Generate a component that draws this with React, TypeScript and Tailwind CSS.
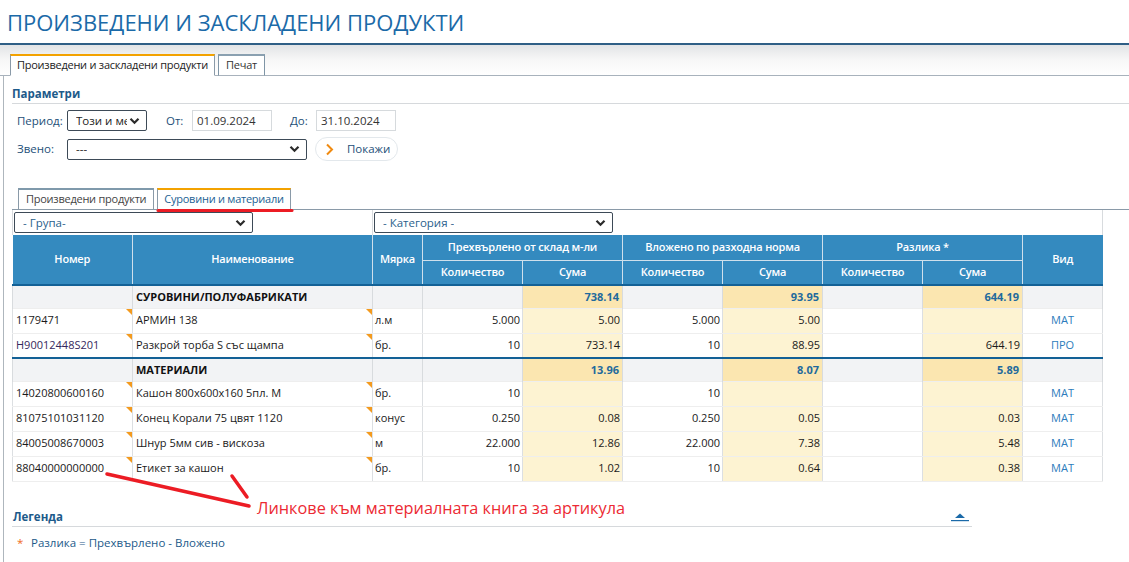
import React from "react";

const Chevron = () => (
  <svg width="11" height="8" viewBox="0 0 11 8" className="shrink-0">
    <path d="M1.5 1.8 L5.5 5.8 L9.5 1.8" fill="none" stroke="#2b2b2b" strokeWidth="2.2" />
  </svg>
);

const Select = ({ w, text, textCls = "text-[#222]" }: { w: string; text: string; textCls?: string }) => (
  <div className={`${w} h-[21px] border border-[#3d4a57] rounded-[2px] bg-white flex items-center justify-between pl-[8px] pr-[6px] gap-[2px]`}>
    <span className={`${textCls} text-[11.5px] whitespace-nowrap overflow-hidden`}>{text}</span>
    <Chevron />
  </div>
);

type Row = {
  g?: boolean;
  n?: string;
  name: string;
  m?: string;
  q1?: string;
  s1?: string;
  q2?: string;
  s2?: string;
  q3?: string;
  s3?: string;
  v?: string;
  sep?: boolean;
};

const rows: Row[] = [
  { g: true, name: "СУРОВИНИ/ПОЛУФАБРИКАТИ", s1: "738.14", s2: "93.95", s3: "644.19" },
  { n: "1179471", name: "АРМИН 138", m: "л.м", q1: "5.000", s1: "5.00", q2: "5.000", s2: "5.00", v: "МАТ" },
  { n: "H90012448S201", name: "Разкрой торба S със щампа", m: "бр.", q1: "10", s1: "733.14", q2: "10", s2: "88.95", s3: "644.19", v: "ПРО" },
  { g: true, sep: true, name: "МАТЕРИАЛИ", s1: "13.96", s2: "8.07", s3: "5.89" },
  { n: "14020800600160", name: "Кашон 800x600x160 5пл. М", m: "бр.", q1: "10", q2: "10", v: "МАТ" },
  { n: "81075101031120", name: "Конец Корали 75 цвят 1120", m: "конус", q1: "0.250", s1: "0.08", q2: "0.250", s2: "0.05", s3: "0.03", v: "МАТ" },
  { n: "84005008670003", name: "Шнур 5мм сив - вискоза", m: "м", q1: "22.000", s1: "12.86", q2: "22.000", s2: "7.38", s3: "5.48", v: "МАТ" },
  { n: "88040000000000", name: "Етикет за кашон", m: "бр.", q1: "10", s1: "1.02", q2: "10", s2: "0.64", s3: "0.38", v: "МАТ" },
];

const Corner = () => (
  <span className="absolute right-0 top-0 w-0 h-0 border-t-[6px] border-t-[#f39a1e] border-l-[6px] border-l-transparent" />
);

export default function App() {
  const font = { fontFamily: '"Open Sans", "Noto Sans", sans-serif' };
  return (
    <div className="w-[1129px] h-[562px] overflow-hidden bg-white relative" style={font}>
      {/* Title */}
      <div className="h-[45px] border-b-[2px] border-[#2f5f86] pl-[7px] flex items-center">
        <h1 className="text-[22px] leading-none text-[#1b6aa8] pt-[1px]">
          ПРОИЗВЕДЕНИ И ЗАСКЛАДЕНИ ПРОДУКТИ
        </h1>
      </div>
      {/* Top tabs */}
      <div className="h-[31px] bg-gradient-to-b from-[#e2e4e6] via-[#f7f7f7] to-white flex items-end pl-[10px] gap-[3px] border-b border-[#a8b2bc]">
        <div className="h-[22px] mb-[-1px] bg-white border border-[#8a9aa8] border-b-white border-t-[2px] border-t-[#f3a200] px-[6px] flex items-center text-[11px] tracking-[-0.25px] text-[#222]">
          Произведени и заскладени продукти
        </div>
        <div className="h-[22px] mb-[-1px] bg-white border border-[#7f95a6] border-b-[#a8b2bc] border-t-[2px] border-t-[#8aa0b0] px-[7px] flex items-center text-[11px] tracking-[-0.25px] text-[#333]">
          Печат
        </div>
      </div>
      {/* Content panel */}
      <div className="ml-[3px] border-l border-[#aeb6bd] h-[486px] pl-[8px]">
        <div className="pt-[10px]">
          <div className="text-[11.5px] font-bold text-[#1d5a8a] h-[18px] border-b border-[#d6d9dc] leading-[16px]">
            Параметри
          </div>
          <div className="pl-[5px] pt-[6px] flex items-center text-[11.5px] text-[#1d4f78]">
            <span className="w-[50px]">Период:</span>
            <Select w="w-[80px]" text="Този и месец" />
            <span className="ml-[19px] w-[26px]">От:</span>
            <div className="w-[80px] h-[21px] border border-[#d6dadd] px-[4px] flex items-center text-[#333]">01.09.2024</div>
            <span className="ml-[18px] w-[26px]">До:</span>
            <div className="w-[80px] h-[21px] border border-[#d6dadd] px-[4px] flex items-center text-[#333]">31.10.2024</div>
          </div>
          <div className="pl-[5px] pt-[6px] flex items-center text-[11.5px] text-[#1d4f78]">
            <span className="w-[50px]">Звено:</span>
            <Select w="w-[240px]" text="---" />
            <div className="ml-[8px] h-[24px] w-[83px] rounded-full border border-[#e3e8ec] flex items-center pl-[9px] gap-[13px] text-[#1d4f78]">
              <svg width="9" height="13" viewBox="0 0 9 13">
                <path d="M2 1.5 L7 6.5 L2 11.5" fill="none" stroke="#f08a10" strokeWidth="2" />
              </svg>
              <span>Покажи</span>
            </div>
          </div>
        </div>
        {/* Inner tabs */}
        <div className="mt-[26px] h-[23px] flex items-end gap-[3px] pl-[6px] border-b border-[#8a9aa8]">
          <div className="h-[22px] mb-[-1px] bg-white border border-[#8a9aa8] border-t-[2px] border-t-[#7f99ab] px-[7px] flex items-center text-[11px] tracking-[-0.25px] text-[#444]">
            Произведени продукти
          </div>
          <div className="h-[22px] mb-[-1px] bg-white border border-[#8a9aa8] border-b-white border-t-[2px] border-t-[#f3a200] px-[6px] flex items-center text-[11px] tracking-[-0.25px] text-[#1b5f94]">
            Суровини и материали
          </div>
        </div>
        {/* Table */}
        <table className="table-fixed border-collapse text-[11px]" style={{ width: 1090 }}>
          <colgroup>
            <col style={{ width: 120 }} />
            <col style={{ width: 240 }} />
            <col style={{ width: 50 }} />
            <col style={{ width: 100 }} />
            <col style={{ width: 100 }} />
            <col style={{ width: 100 }} />
            <col style={{ width: 100 }} />
            <col style={{ width: 100 }} />
            <col style={{ width: 100 }} />
            <col style={{ width: 80 }} />
          </colgroup>
          <thead>
            <tr className="h-[25px]">
              <td colSpan={2} className="border-l border-r border-[#d8dbde] pl-[1px] align-middle">
                <Select w="w-[239px]" text="- Група-" textCls="text-[#2a5f8c]" />
              </td>
              <td colSpan={8} className="border-r border-[#d8dbde] pl-[1px] align-middle">
                <Select w="w-[239px]" text="- Категория -" textCls="text-[#2a5f8c]" />
              </td>
            </tr>
            <tr className="h-[25px] bg-[#348abf] text-white">
              <th rowSpan={2} className="font-semibold tracking-[-0.2px] border-r border-[#cfe0ec] border-b-[2px] border-b-[#136196]">Номер</th>
              <th rowSpan={2} className="font-semibold tracking-[-0.2px] border-r border-[#cfe0ec] border-b-[2px] border-b-[#136196]">Наименование</th>
              <th rowSpan={2} className="font-semibold tracking-[-0.2px] border-r border-[#cfe0ec] border-b-[2px] border-b-[#136196]">Мярка</th>
              <th colSpan={2} className="font-semibold tracking-[-0.2px] border-r border-b border-[#cfe0ec]">Прехвърлено от склад м-ли</th>
              <th colSpan={2} className="font-semibold tracking-[-0.2px] border-r border-b border-[#cfe0ec]">Вложено по разходна норма</th>
              <th colSpan={2} className="font-semibold tracking-[-0.2px] border-r border-b border-[#cfe0ec]">Разлика *</th>
              <th rowSpan={2} className="font-semibold tracking-[-0.2px] border-b-[2px] border-b-[#136196]">Вид</th>
            </tr>
            <tr className="h-[25px] bg-[#348abf] text-white">
              {["Количество", "Сума", "Количество", "Сума", "Количество", "Сума"].map((t, i) => (
                <th key={i} className="font-semibold tracking-[-0.2px] border-r border-[#cfe0ec] border-b-[2px] border-b-[#136196]">
                  {t}
                </th>
              ))}
            </tr>
          </thead>
          <tbody>
            {rows.map((r, i) => {
              const sepCls = r.sep ? "border-t-[2px] border-t-[#136196]" : "";
              if (r.g) {
                const gs = `bg-[#fbe6b0] text-right pr-[3px] font-bold text-[#1f6a9c] border-l border-r border-[#d8dbde] ${sepCls}`;
                const ge = `bg-[#f2f3f5] border-l border-r border-[#d8dbde] ${sepCls}`;
                return (
                  <tr key={i} className="h-[23px]">
                    <td className={ge} />
                    <td className={`${ge} font-bold text-[#111] pl-[3px]`}>{r.name}</td>
                    <td className={ge} />
                    <td className={ge} />
                    <td className={gs}>{r.s1}</td>
                    <td className={ge} />
                    <td className={gs}>{r.s2}</td>
                    <td className={ge} />
                    <td className={gs}>{r.s3}</td>
                    <td className={ge} />
                  </tr>
                );
              }
              const c = "border border-[#dcdfe2] border-t-[#eeeeee] border-b-[#eeeeee] text-[#1a1a1a]";
              const num = `${c} text-right pr-[2px]`;
              const sum = `${num} bg-[#fdf3d2]`;
              return (
                <tr key={i} className="h-[25px]">
                  <td className={`${c} relative pl-[3px] ${r.n?.startsWith("H") ? "text-[#35275c]" : ""}`}>
                    {r.n}
                    <Corner />
                  </td>
                  <td className={`${c} relative pl-[3px]`}>
                    {r.name}
                    <Corner />
                  </td>
                  <td className={`${c} pl-[2px]`}>{r.m}</td>
                  <td className={num}>{r.q1}</td>
                  <td className={sum}>{r.s1}</td>
                  <td className={num}>{r.q2}</td>
                  <td className={sum}>{r.s2}</td>
                  <td className={num}>{r.q3}</td>
                  <td className={sum}>{r.s3}</td>
                  <td className={`${c} text-center text-[#2b7cbc]`}>{r.v}</td>
                </tr>
              );
            })}
            <tr>
              <td colSpan={10} className="border-t border-[#d8dbde] h-0 p-0" />
            </tr>
          </tbody>
        </table>
        {/* Legend */}
        <div className="mt-[27px] w-[960px] h-[18px] border-b-[1.5px] border-[#d6d9dc] flex items-start justify-between">
          <span className="text-[11.5px] font-bold text-[#1d5a8a] leading-[16px] pl-[1px]">Легенда</span>
          <svg width="18" height="10" viewBox="0 0 18 10" className="mr-[3px] mt-[3px]">
            <path d="M4 6 L9 1.5 L14 6 Z" fill="#1b6aa8" />
            <rect x="0" y="8" width="18" height="1.2" fill="#1b6aa8" />
          </svg>
        </div>
        <div className="pl-[5px] pt-[7px] flex items-center text-[11.5px] text-[#1d5a8a]">
          <span className="text-[#f06a20] w-[14px]">*</span>
          <span>Разлика = Прехвърлено - Вложено</span>
        </div>
      </div>
      {/* Annotations */}
      <svg className="absolute left-0 top-0 pointer-events-none" width="1129" height="562">
        <line x1="158" y1="210.5" x2="292" y2="210.5" stroke="#ec1c24" strokeWidth="3" strokeLinecap="round" />
        <line x1="107" y1="474" x2="249" y2="506" stroke="#ec1c24" strokeWidth="3.5" strokeLinecap="round" />
        <line x1="232" y1="476" x2="247" y2="497" stroke="#ec1c24" strokeWidth="3.5" strokeLinecap="round" />
      </svg>
      <div className="absolute left-[257px] top-[497px] text-[16.3px] leading-[22px] text-[#ec2a33]">
        Линкове към материалната книга за артикула
      </div>
    </div>
  );
}
